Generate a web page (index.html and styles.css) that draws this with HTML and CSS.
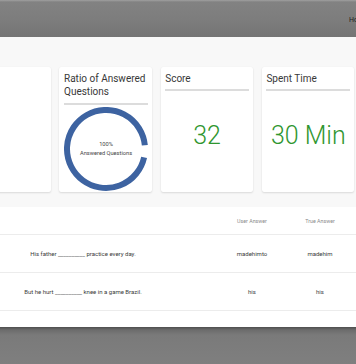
FILE: index.html
```html
<!DOCTYPE html>
<html>
<head>
<meta charset="utf-8">
<link rel="stylesheet" href="styles.css">
</head>
<body>
<header class="topbar"><span class="topbar-link">Home</span></header>
<main class="main">
  <section class="cards">
    <div class="card"></div>
    <div class="card">
      <div class="card-title">Ratio of Answered Questions</div>
      <div class="donut">
        <svg width="84" height="84" viewBox="0 0 84 84">
          <path d="M80.1 50.3 A39 39 0 1 1 80.83 38.33" fill="none" stroke="#3d63a1" stroke-width="6"/>
        </svg>
        <div class="donut-label">
          <div>100%</div>
          <div>Answered Questions</div>
        </div>
      </div>
    </div>
    <div class="card">
      <div class="card-title">Score</div>
      <div class="card-value">32</div>
    </div>
    <div class="card">
      <div class="card-title">Spent Time</div>
      <div class="card-value">30 Min</div>
    </div>
  </section>
  <section class="table">
    <div class="row head">
      <div class="cell"></div>
      <div class="cell"></div>
      <div class="cell">User Answer</div>
      <div class="cell">True Answer</div>
    </div>
    <div class="row">
      <div class="cell">His father __________ practice every day.</div>
      <div class="cell"></div>
      <div class="cell">madehimto</div>
      <div class="cell">madehim</div>
    </div>
    <div class="row">
      <div class="cell">But he hurt __________ knee in a game Brazil.</div>
      <div class="cell"></div>
      <div class="cell">his</div>
      <div class="cell">his</div>
    </div>
    <div class="row">
      <div class="cell">Football is a __________ of the world.</div>
      <div class="cell"></div>
      <div class="cell">sport</div>
      <div class="cell">sport</div>
    </div>
  </section>
</main>
<footer class="bottombar"></footer>
</body>
</html>
```
FILE: styles.css
```css
html, body {
  margin: 0;
  padding: 0;
}
body {
  width: 356px;
  height: 364px;
  overflow: hidden;
  font-family: Roboto, "Noto Sans", sans-serif;
  background: #f8f8f8;
}
.topbar {
  height: 37px;
  box-sizing: border-box;
  background: linear-gradient(#a0a0a0 0, #828282 2px, #7c7c7c 60%, #747474 100%);
  display: flex;
  justify-content: flex-end;
  align-items: center;
  overflow: hidden;
  padding-top: 2px;
}
.topbar-link {
  flex: none;
  width: 7px;
  overflow: hidden;
  white-space: nowrap;
  font-size: 7px;
  color: #1e1e1e;
}
.main {
  height: 290px;
  overflow: hidden;
  background: #f8f8f8;
  padding-top: 30px;
  box-sizing: border-box;
}
.cards {
  display: flex;
  justify-content: flex-end;
  gap: 8.7px;
  padding-right: 1.8px;
}
.card {
  flex: none;
  width: 92.5px;
  height: 125px;
  box-sizing: border-box;
  background: #fff;
  border-radius: 2px;
  box-shadow: 0 1px 2px rgba(0, 0, 0, 0.12), 0 0 1px rgba(0, 0, 0, 0.06);
  padding: 4.5px 4px 1px 4.7px;
  display: flex;
  flex-direction: column;
}
.card-title {
  font-size: 10px;
  line-height: 13.3px;
  color: #383838;
  padding-bottom: 4.5px;
  border-bottom: 2px solid #dcdcdc;
}
.donut {
  position: relative;
  width: 84px;
  height: 84px;
  margin: 2.5px auto 0;
}
.donut svg {
  display: block;
}
.donut-label {
  position: absolute;
  inset: 0;
  display: flex;
  flex-direction: column;
  justify-content: center;
  align-items: center;
  font-size: 5.7px;
  line-height: 9.5px;
  color: #444;
}
.card-value {
  text-align: center;
  padding-top: 30px;
  font-size: 25px;
  font-weight: 300;
  color: #2f962f;
}
.table {
  margin-top: 15px;
  background: #fff;
}
.row {
  display: grid;
  grid-template-columns: 166px 52px 68px 68px;
  height: 37px;
  align-items: center;
  border-bottom: 1px solid #ececec;
  font-size: 6px;
  color: #3a3a3a;
}
.row.head {
  height: 27px;
  font-size: 5.3px;
  color: #8a8a8a;
}
.cell {
  text-align: center;
  white-space: nowrap;
}
.bottombar {
  height: 37px;
  background: linear-gradient(#4e4e4e 0, #6c6c6c 3px, #7a7a7a 8px, #7f7f7f 100%);
}
```
